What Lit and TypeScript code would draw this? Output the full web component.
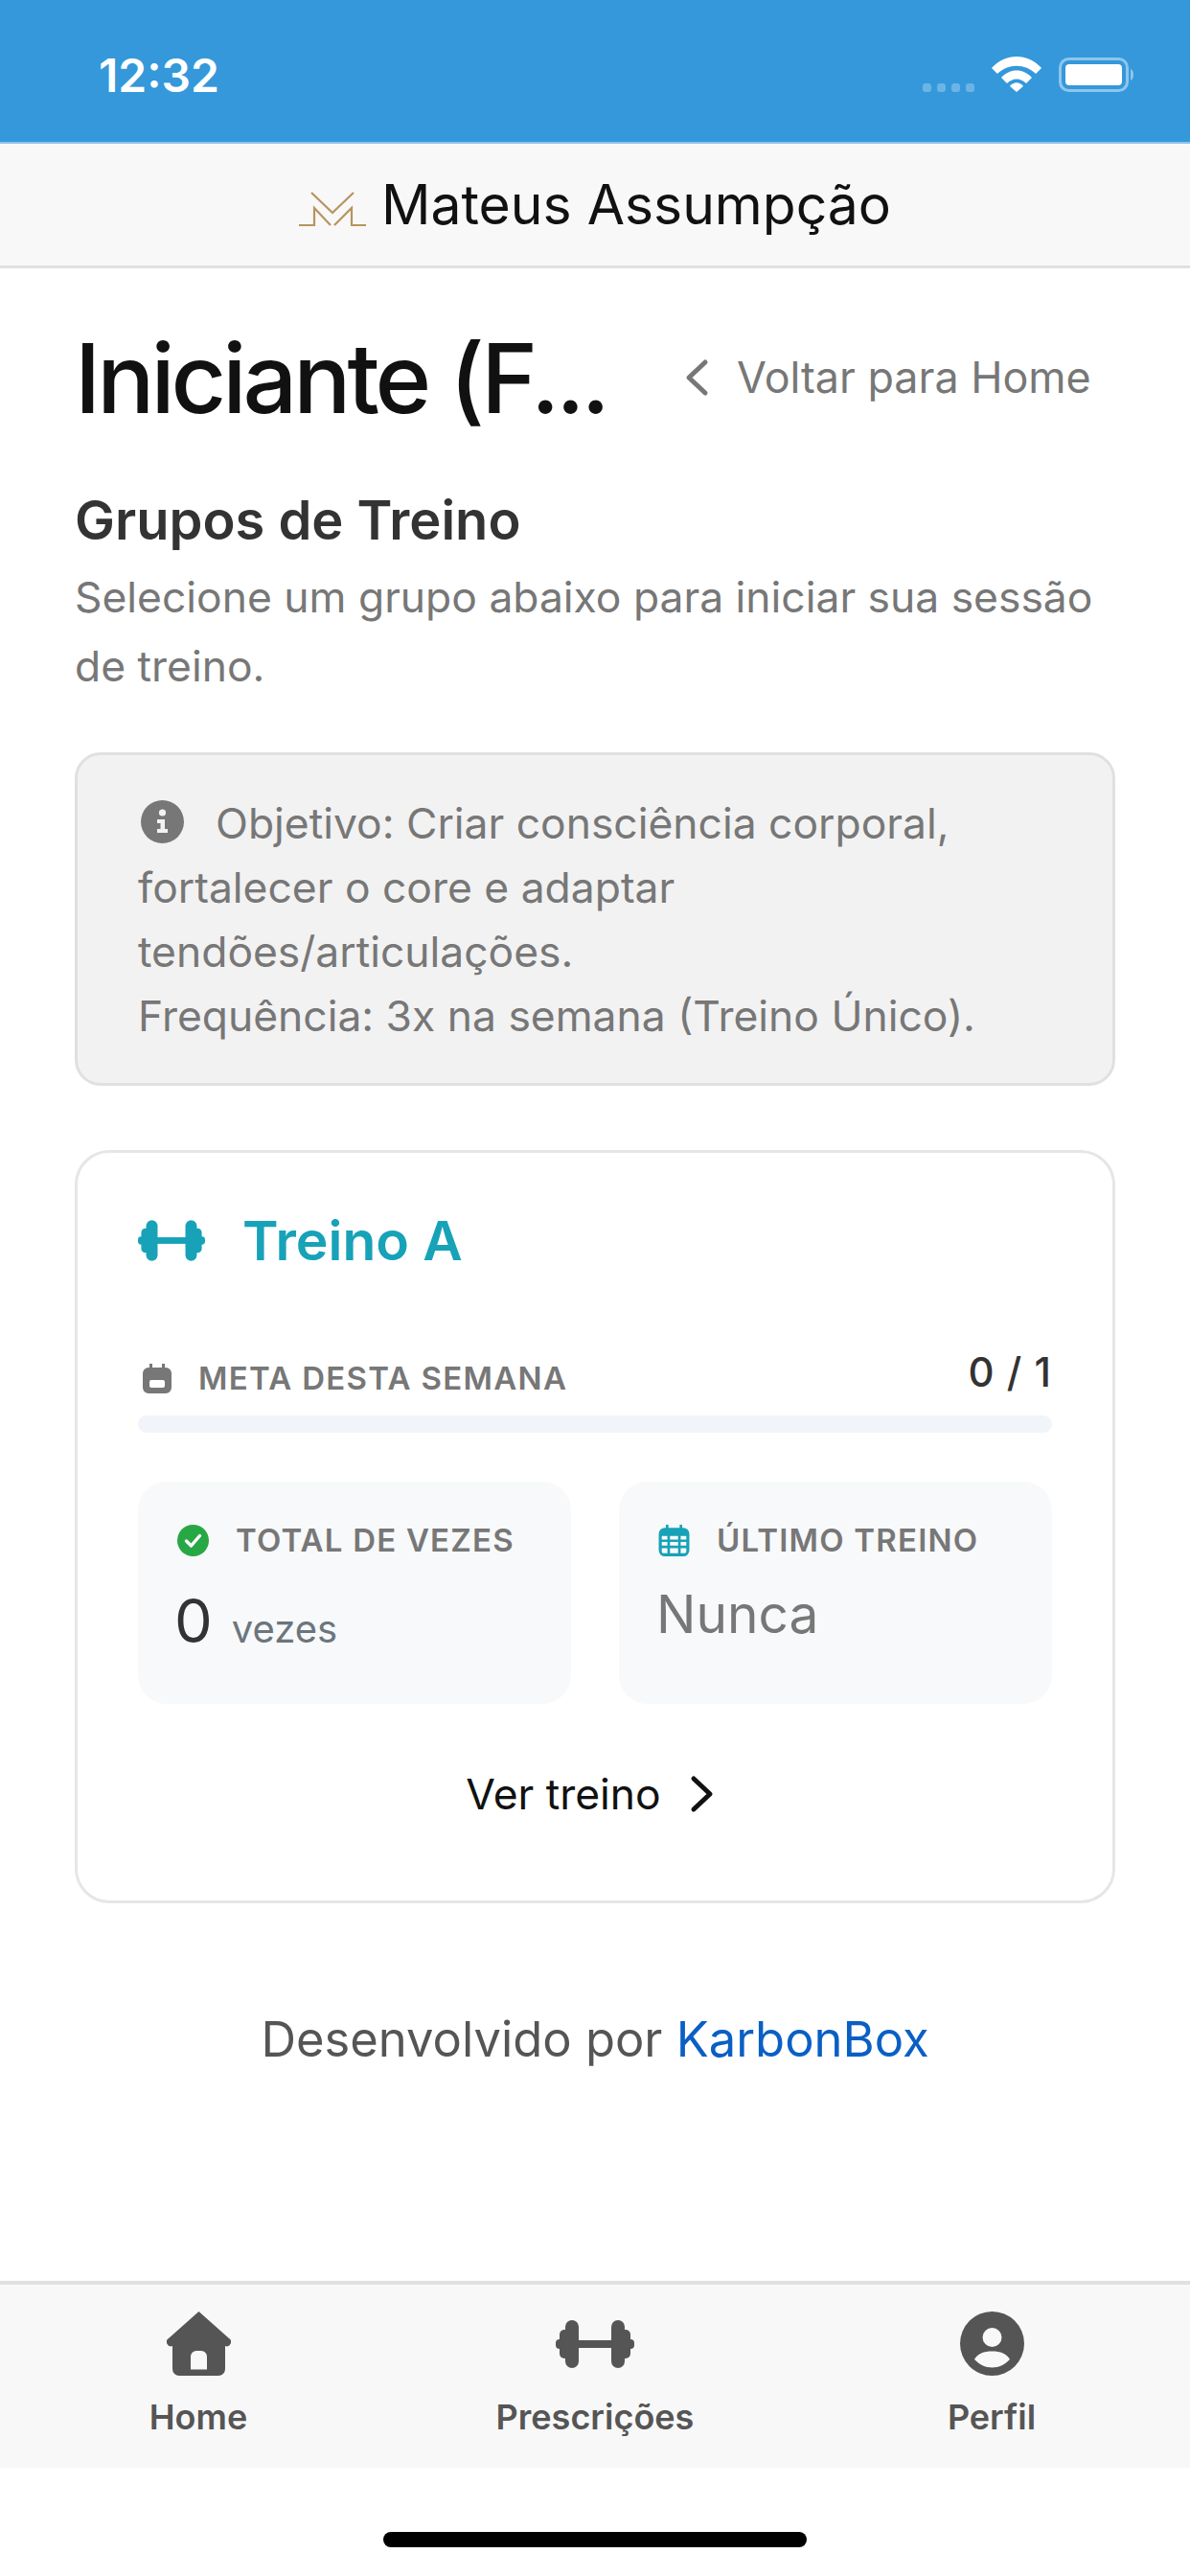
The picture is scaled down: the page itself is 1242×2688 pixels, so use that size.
import { LitElement, css, html, svg } from 'lit';
import { customElement } from 'lit/decorators.js';

const barbell = svg`
  <rect x="0" y="20" width="8" height="10" rx="4" />
  <rect x="4" y="10" width="12" height="30" rx="5" />
  <rect x="10" y="0" width="14" height="50" rx="7" />
  <rect x="20" y="21" width="42" height="8" />
  <rect x="58" y="0" width="14" height="50" rx="7" />
  <rect x="66" y="10" width="12" height="30" rx="5" />
  <rect x="74" y="20" width="8" height="10" rx="4" />
`;

@customElement('app-root')
export class AppRoot extends LitElement {
  static styles = css`
    :host {
      display: flex;
      flex-direction: column;
      width: 1242px;
      height: 2688px;
      background: #fff;
      font-family: Inter, 'Liberation Sans', sans-serif;
      color: #777;
    }

    * {
      box-sizing: border-box;
    }

    svg {
      display: block;
      flex: none;
    }

    .status {
      height: 150px;
      flex: none;
      background: #3498db;
      border-bottom: 2px solid #8cc4ea;
      display: flex;
      align-items: flex-start;
      padding: 52px 57px 0 103px;
      color: #fff;
    }

    .time {
      font-size: 48px;
      font-weight: 600;
      line-height: 54px;
      flex: 1;
    }

    .signal {
      display: flex;
      gap: 6px;
      margin-top: 35px;
      margin-right: 18px;
    }

    .signal i {
      width: 9px;
      height: 9px;
      border-radius: 3px;
      background: rgba(255, 255, 255, 0.28);
    }

    .wifi {
      width: 52px;
      height: 38px;
      margin-top: 6px;
      margin-right: 18px;
    }

    .battery {
      width: 80px;
      height: 36px;
      margin-top: 8px;
    }

    .brand {
      height: 130px;
      flex: none;
      background: #f8f8f8;
      border-bottom: 3px solid #e0e0e0;
      display: flex;
      align-items: center;
      justify-content: center;
      gap: 16px;
      color: #111;
      font-size: 57px;
      padding-bottom: 1px;
    }

    .logo {
      width: 70px;
      height: 38px;
      margin-top: 12px;
    }

    main {
      flex: 1;
      padding: 0 78px;
    }

    .top {
      display: flex;
      align-items: center;
      height: 156px;
      margin-top: 36px;
    }

    h1 {
      margin: 0;
      flex: 1;
      min-width: 0;
      font-size: 100px;
      font-weight: 500;
      letter-spacing: -4px;
      color: #111;
      white-space: nowrap;
    }

    .back {
      display: flex;
      align-items: center;
      gap: 29px;
      flex: none;
      width: 450px;
      font-size: 44.8px;
      white-space: nowrap;
      color: #777;
    }

    .back svg {
      width: 26px;
      height: 40px;
    }

    h2 {
      margin: 38px 0 0;
      font-size: 56px;
      line-height: 66px;
      font-weight: 600;
      color: #333;
    }

    .lead {
      margin: 11px 0 0;
      font-size: 44.4px;
      line-height: 72px;
      color: #777;
    }

    .info {
      margin-top: 54px;
      height: 348px;
      background: #f2f2f2;
      border: 3px solid #e0e0e0;
      border-radius: 27px;
      padding: 38px 63px 0;
      font-size: 44.4px;
      line-height: 67px;
      color: #777;
    }

    .info svg {
      display: inline-block;
      width: 45px;
      height: 45px;
      vertical-align: -5px;
      margin: 0 33px 0 3px;
    }

    .card {
      margin-top: 67px;
      height: 786px;
      border: 3px solid #e6e6e6;
      border-radius: 36px;
      padding: 63px 63px 0;
    }

    .name {
      display: flex;
      align-items: center;
      gap: 39px;
      height: 57px;
      font-size: 57px;
      font-weight: 600;
      color: #17a2b8;
    }

    .name svg {
      width: 70px;
      height: 43px;
      fill: #17a2b8;
    }

    .meta {
      display: flex;
      align-items: center;
      margin-top: 91px;
      height: 48px;
      font-size: 33px;
      font-weight: 600;
      letter-spacing: 1.3px;
      color: #777;
    }

    .meta svg {
      width: 30px;
      height: 31px;
      margin: 0 28px 0 5px;
    }

    .meta b {
      margin-left: auto;
      font-size: 42px;
      font-weight: 500;
      letter-spacing: 1px;
      color: #333;
      margin-top: -14px;
    }

    .bar {
      margin-top: 15px;
      height: 18px;
      border-radius: 9px;
      background: #f1f4f8;
    }

    .tiles {
      display: grid;
      grid-template-columns: 1fr 1fr;
      gap: 50px;
      margin-top: 51px;
    }

    .tile {
      height: 232px;
      background: #f8f9fa;
      border-radius: 30px;
      padding: 43px 41px 0;
    }

    .label {
      display: flex;
      align-items: center;
      gap: 28px;
      height: 36px;
      font-size: 33px;
      font-weight: 600;
      letter-spacing: 1.2px;
      color: #777;
    }

    .label svg {
      width: 33px;
      height: 33px;
    }

    .value {
      display: flex;
      align-items: baseline;
      gap: 20px;
      margin-top: 28px;
      margin-left: -3px;
      font-size: 63px;
      line-height: 76px;
      color: #333;
    }

    .value span {
      font-size: 40px;
      color: #6c757d;
    }

    .value.none {
      font-size: 55px;
      color: #777;
      margin-top: 21px;
      margin-left: -2px;
    }

    .more {
      display: flex;
      align-items: center;
      justify-content: center;
      gap: 30px;
      margin-top: 63px;
      height: 62px;
      padding-right: 10px;
      font-size: 44.4px;
      color: #111;
    }

    .more svg {
      width: 26px;
      height: 40px;
    }

    .credit {
      margin: 110px 0 0;
      text-align: center;
      font-size: 50.7px;
      line-height: 64px;
      color: #555;
    }

    .credit a {
      color: #0a5fc4;
      text-decoration: none;
    }

    nav {
      flex: none;
      height: 195px;
      background: #f8f8f8;
      border-top: 4px solid #e0e0e0;
      display: grid;
      grid-template-columns: repeat(3, 1fr);
      padding-top: 28px;
    }

    nav div {
      display: flex;
      flex-direction: column;
      align-items: center;
      font-size: 36px;
      font-weight: 600;
      color: #555;
    }

    nav .slot {
      height: 67px;
      justify-content: center;
      margin-bottom: 21px;
    }

    nav svg {
      fill: #555;
    }

    .home-bar {
      flex: none;
      height: 113px;
      padding-top: 67px;
    }

    .home-bar i {
      display: block;
      width: 442px;
      height: 16px;
      margin: 0 auto;
      border-radius: 8px;
      background: #000;
    }
  `;

  render() {
    return html`
      <div class="status">
        <div class="time">12:32</div>
        <div class="signal"><i></i><i></i><i></i><i></i></div>
        <svg class="wifi" viewBox="0 0 52 38" fill="#fff">
          <path d="M0 13 C14 -3 38 -3 52 13 L46 19 C35 8 17 8 6 19 Z" />
          <path d="M10 23 C19 13 33 13 42 23 L36 29 C30 23 22 23 16 29 Z" />
          <path d="M19 32 C23 27 29 27 33 32 L26 38 Z" />
        </svg>
        <svg class="battery" viewBox="0 0 80 36">
          <rect x="1.5" y="1.5" width="70" height="33" rx="9" fill="none" stroke="#fff" stroke-opacity="0.45" stroke-width="3" />
          <rect x="7" y="7" width="59" height="22" rx="4" fill="#fff" />
          <path d="M75 12 C79 13 79 23 75 24 Z" fill="#fff" fill-opacity="0.45" />
        </svg>
      </div>

      <div class="brand">
        <svg class="logo" viewBox="0 0 70 38" fill="none" stroke="#b8945f" stroke-width="2.2">
          <path d="M13 1 L35 22 L57 1" />
          <path d="M0 35 H16 V17 L33 35" />
          <path d="M37 35 L55 17 V35 H70" />
        </svg>
        <span>Mateus Assumpção</span>
      </div>

      <main>
        <div class="top">
          <h1>Iniciante (F...</h1>
          <div class="back">
            <svg viewBox="0 0 26 40" fill="none" stroke="#777" stroke-width="5" stroke-linecap="round" stroke-linejoin="round">
              <path d="M22 4 L5 20 L22 36" />
            </svg>
            <span>Voltar para Home</span>
          </div>
        </div>

        <h2>Grupos de Treino</h2>
        <p class="lead">Selecione um grupo abaixo para iniciar sua sessão de treino.</p>

        <div class="info">
          <svg viewBox="0 0 45 45">
            <circle cx="22.5" cy="22.5" r="22.5" fill="#777" />
            <circle cx="22.5" cy="13" r="3.6" fill="#f2f2f2" />
            <path d="M17 20 H25 V30 H28 V34 H17 V30 H20.5 V24 H17 Z" fill="#f2f2f2" />
          </svg>Objetivo: Criar consciência corporal, fortalecer o core e adaptar tendões/articulações.<br />Frequência: 3x na semana (Treino Único).
        </div>

        <div class="card">
          <div class="name">
            <svg viewBox="0 0 82 50">${barbell}</svg>
            <span>Treino A</span>
          </div>

          <div class="meta">
            <svg viewBox="0 0 30 31" fill="#777">
              <path fill-rule="evenodd" d="M7 0 h3 v4 h10 V0 h3 v4 h1 a6 6 0 0 1 6 6 V25 a6 6 0 0 1 -6 6 H6 a6 6 0 0 1 -6 -6 V10 a6 6 0 0 1 6 -6 h1 Z M9 17 a2 2 0 0 0 -2 2 v4 a2 2 0 0 0 2 2 h12 a2 2 0 0 0 2 -2 v-4 a2 2 0 0 0 -2 -2 Z" />
            </svg>
            <span>META DESTA SEMANA</span>
            <b>0 / 1</b>
          </div>
          <div class="bar"></div>

          <div class="tiles">
            <div class="tile">
              <div class="label">
                <svg viewBox="0 0 33 33">
                  <circle cx="16.5" cy="16.5" r="16.5" fill="#28a745" />
                  <path d="M9.5 17 L14.5 22 L23.5 11.5" fill="none" stroke="#fff" stroke-width="3.4" stroke-linecap="round" stroke-linejoin="round" />
                </svg>
                <span>TOTAL DE VEZES</span>
              </div>
              <div class="value">0 <span>vezes</span></div>
            </div>
            <div class="tile">
              <div class="label">
                <svg viewBox="0 0 30 31" fill="#17a2b8">
                  <path fill-rule="evenodd" d="M7 0 h2.5 v3 h11 V0 H23 v3 h1 a6 6 0 0 1 6 6 V25 a6 6 0 0 1 -6 6 H6 a6 6 0 0 1 -6 -6 V9 a6 6 0 0 1 6 -6 h1 Z M3 11 v3.5 h5.5 V11 Z M11 11 v3.5 h8 V11 Z M21.5 11 v3.5 H27 V11 Z M3 17 v3.5 h5.5 V17 Z M11 17 v3.5 h8 V17 Z M21.5 17 v3.5 H27 V17 Z M3 23 v3.5 a2 2 0 0 0 2 1.5 h3.5 V23 Z M11 23 v5 h8 V23 Z M21.5 23 v5 H25 a2 2 0 0 0 2 -1.5 V23 Z" />
                </svg>
                <span>ÚLTIMO TREINO</span>
              </div>
              <div class="value none">Nunca</div>
            </div>
          </div>

          <div class="more">
            <span>Ver treino</span>
            <svg viewBox="0 0 26 40" fill="none" stroke="#111" stroke-width="5" stroke-linecap="round" stroke-linejoin="round">
              <path d="M4 4 L21 20 L4 36" />
            </svg>
          </div>
        </div>

        <p class="credit">Desenvolvido por <a href="#">KarbonBox</a></p>
      </main>

      <nav>
        <div>
          <div class="slot">
            <svg width="67" height="67" viewBox="0 0 67 67">
              <path fill-rule="evenodd" d="M33.5 0 L65 28 a4.5 4.5 0 0 1 -4 8 V60 a7 7 0 0 1 -7 7 H13 a7 7 0 0 1 -7 -7 V36 a4.5 4.5 0 0 1 -4 -8 Z M25 60.5 H42 V47 a6 6 0 0 0 -6 -6 h-5 a6 6 0 0 0 -6 6 Z" />
            </svg>
          </div>
          <span>Home</span>
        </div>
        <div>
          <div class="slot">
            <svg width="82" height="50" viewBox="0 0 82 50">${barbell}</svg>
          </div>
          <span>Prescrições</span>
        </div>
        <div>
          <div class="slot">
            <svg width="67" height="67" viewBox="0 0 67 67">
              <path fill-rule="evenodd" d="M33.5 0 a33.5 33.5 0 1 1 0 67 a33.5 33.5 0 1 1 0 -67 Z M33.5 17 a10 10 0 1 0 0 20 a10 10 0 1 0 0 -20 Z M15 50 C18 44 25 41.5 33.5 41.5 S49 44 52 50 C47 55 41 58.5 33.5 58.5 S20 55 15 50 Z" />
            </svg>
          </div>
          <span>Perfil</span>
        </div>
      </nav>
      <div class="home-bar"><i></i></div>
    `;
  }
}
